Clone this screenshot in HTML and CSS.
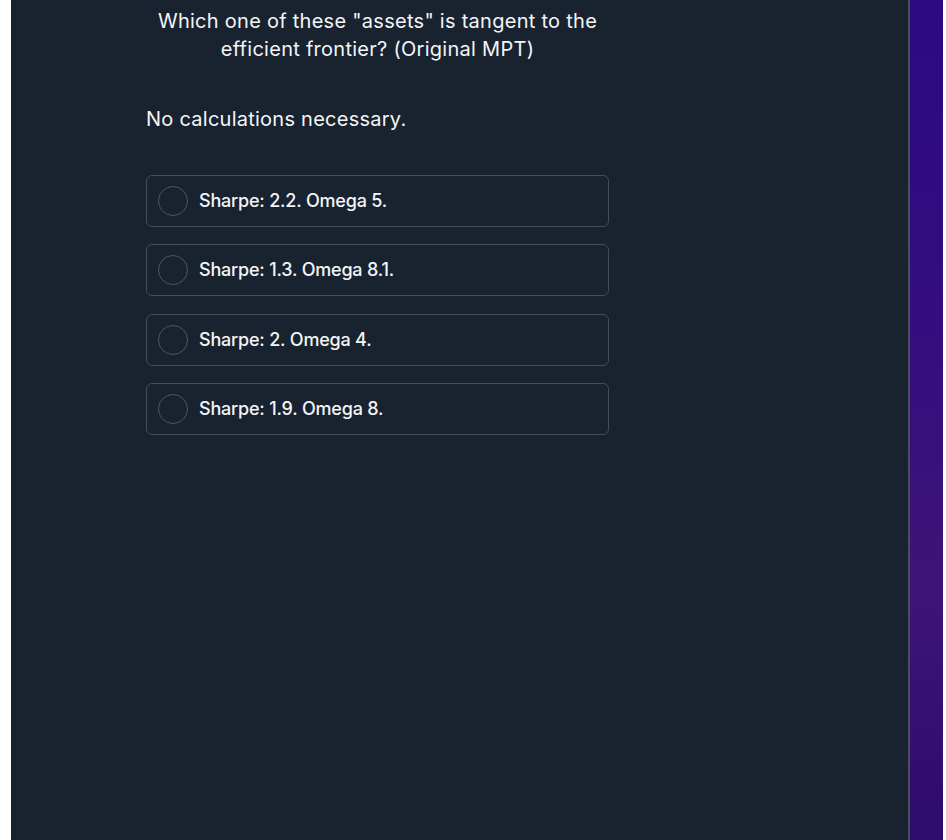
FILE: index.html
```html
<!DOCTYPE html>
<html>
<head>
<meta charset="utf-8">
<link rel="stylesheet" href="styles.css">
</head>
<body>
<div class="layout">
  <main class="panel">
    <div class="quiz">
      <h1 class="question">Which one of these "assets" is tangent to the<br>efficient frontier? (Original MPT)</h1>
      <p class="note">No calculations necessary.</p>
      <ul class="options">
        <li class="option"><span class="radio"></span><span class="label">Sharpe: 2.2. Omega 5.</span></li>
        <li class="option"><span class="radio"></span><span class="label">Sharpe: 1.3. Omega 8.1.</span></li>
        <li class="option"><span class="radio"></span><span class="label">Sharpe: 2. Omega 4.</span></li>
        <li class="option"><span class="radio"></span><span class="label">Sharpe: 1.9. Omega 8.</span></li>
      </ul>
    </div>
  </main>
  <aside class="side"></aside>
</div>
</body>
</html>
```
FILE: styles.css
```css
html, body {
  margin: 0;
  padding: 0;
  background: #ffffff;
  height: 100%;
}
body {
  font-family: Inter, "Noto Sans", sans-serif;
  color: #f3f5f7;
}
.layout {
  display: flex;
  height: 840px;
  padding-left: 11px;
  padding-right: 3px;
}
.panel {
  width: 899px;
  background: #19232f;
  border-right: 2px solid #46505a;
  box-sizing: border-box;
  padding: 7px 0 0 135px;
}
.quiz {
  width: 463px;
}
.question {
  margin: 0;
  font-size: 20px;
  line-height: 28px;
  font-weight: 400;
  text-align: center;
  letter-spacing: 0.27px;
}
.note {
  margin: 42px 0 0;
  font-size: 20px;
  line-height: 28px;
  letter-spacing: 0.25px;
}
.options {
  list-style: none;
  margin: 42px 0 0;
  padding: 0;
  display: flex;
  flex-direction: column;
  gap: 17.3px;
}
.option {
  height: 52px;
  box-sizing: border-box;
  border: 1px solid #434d58;
  border-radius: 6px;
  display: flex;
  align-items: center;
  padding-left: 11px;
  gap: 11px;
}
.radio {
  width: 30px;
  height: 30px;
  box-sizing: border-box;
  border: 1px solid #4c5661;
  border-radius: 50%;
  flex: none;
}
.label {
  font-size: 18px;
  line-height: 24px;
  font-weight: 500;
  letter-spacing: -0.2px;
}
.side {
  flex: 1;
  background: linear-gradient(180deg, #2c0a82 0%, #350d7e 40%, #3f1478 70%, #2e0b6c 100%);
}
```
